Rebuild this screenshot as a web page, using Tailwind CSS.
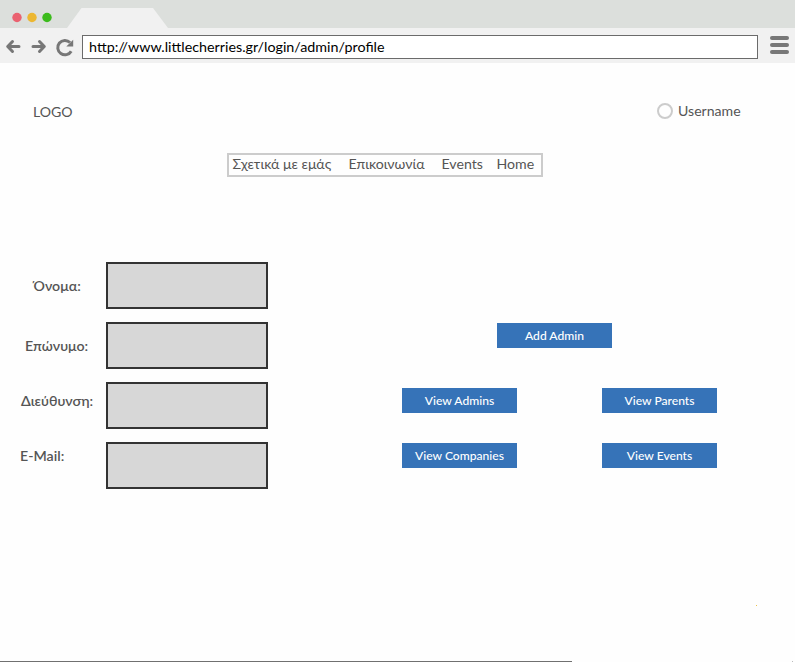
<!DOCTYPE html>
<html lang="el">
<head>
<meta charset="utf-8">
<title>Profile</title>
<script src="https://cdn.jsdelivr.net/npm/@tailwindcss/browser@4"></script>
</head>
<body class="w-[795px] h-[662px] overflow-hidden bg-[#fefefe] font-['Lato','Open_Sans',sans-serif] text-[#555] text-[14px] flex flex-col">
  <header class="h-[63px] shrink-0 bg-[#f1f1f1]">
    <div class="h-7 bg-[#dcdfdc] flex">
      <svg class="w-[168px] h-7" viewBox="0 0 168 28">
        <circle cx="17" cy="17.5" r="4.7" fill="#ea6270"/>
        <circle cx="32" cy="17.5" r="4.7" fill="#ecb731"/>
        <circle cx="47" cy="17.5" r="4.7" fill="#3cbb1c"/>
        <path d="M67 28 81.5 8H153L168 28Z" fill="#f1f1f1"/>
      </svg>
    </div>
    <div class="h-[35px] flex items-start pt-[7px]">
      <svg class="w-[82px] h-6 shrink-0" viewBox="0 35 82 24" fill="none" stroke="#777" stroke-width="3" stroke-linecap="round" stroke-linejoin="round">
        <path d="M8.500 46.500H19M12.500 41.500 7.700 46.500 12.500 51.500"/>
        <path d="M33 46.500H43.500M39.500 41.500 44.300 46.500 39.500 51.500"/>
        <path d="M71.200 51.200A7.200 7.200 0 1 1 70 42.500" stroke-linecap="butt"/>
        <path d="M73.200 39.800V46.500H66.300Z" fill="#777" stroke="none"/>
      </svg>
      <div class="w-[676px] h-6 border border-[#6b6b6b] bg-white pl-[6px] text-[14.3px] text-black leading-[22px] whitespace-nowrap">http://www.littlecherries.gr/login/admin/profile</div>
      <div class="ml-3 mt-px flex flex-col gap-[3px]">
        <i class="block w-[19px] h-1 rounded-full bg-[#777]"></i>
        <i class="block w-[19px] h-1 rounded-full bg-[#777]"></i>
        <i class="block w-[19px] h-1 rounded-full bg-[#777]"></i>
      </div>
    </div>
  </header>

  <div class="h-[90px] shrink-0 flex items-start justify-between pl-[33px] pt-[39px] leading-5">
    <span class="text-[14.100px]">LOGO</span>
    <div class="flex w-[139px]">
      <i class="block size-4 rounded-full border-2 border-[#ccc] ml-[0.5px] mt-[0.5px]"></i>
      <span class="ml-[5.5px] -mt-px text-[14.100px]">Username</span>
    </div>
  </div>

  <nav class="ml-[227px] w-[316px] h-6 shrink-0 border-2 border-[#ccc] flex pl-[3.5px] text-[14.150px] leading-[17px] whitespace-nowrap">
    <a class="w-[116px]">Σχετικά με εμάς</a>
    <a class="w-[93px]">Επικοινωνία</a>
    <a class="w-[55px]">Events</a>
    <a>Home</a>
  </nav>

  <main class="mt-[85px] flex">
    <div class="w-[106px] flex flex-col text-[14.200px] font-semibold leading-5 pt-[14px] whitespace-nowrap">
      <label class="pl-[33.500px] h-[60px]">Όνομα:</label>
      <label class="pl-[25px] h-[55px]">Επώνυμο:</label>
      <label class="pl-[21px] h-[55px]">Διεύθυνση:</label>
      <label class="pl-[20px]">E-Mail:</label>
    </div>
    <div class="w-[162px] flex flex-col gap-[13px]">
      <div class="h-[47px] border-2 border-[#333] bg-[#d7d7d7]"></div>
      <div class="h-[47px] border-2 border-[#333] bg-[#d7d7d7]"></div>
      <div class="h-[47px] border-2 border-[#333] bg-[#d7d7d7]"></div>
      <div class="h-[47px] border-2 border-[#333] bg-[#d7d7d7]"></div>
    </div>
    <div class="ml-[134px] mt-[61px] w-[315px] flex flex-col items-center text-[12.100px] leading-[25px] text-white font-medium text-center">
      <div class="w-[115px] h-[25px] bg-[#3673b8] mr-[10px]">Add Admin</div>
      <div class="mt-10 grid grid-cols-[115px_115px] gap-x-[85px] gap-y-[30px]">
        <div class="h-[25px] bg-[#3673b8]">View Admins</div>
        <div class="h-[25px] bg-[#3673b8]">View Parents</div>
        <div class="h-[25px] bg-[#3673b8]">View Companies</div>
        <div class="h-[25px] bg-[#3673b8]">View Events</div>
      </div>
    </div>
  </main>
  <footer class="mt-auto">
    <div class="flex justify-end pr-[38px] h-[56px]"><i class="block size-px bg-[#ecc14a]"></i></div>
    <div class="flex justify-between pr-[2px]"><i class="block w-[572px] h-px bg-[#707070]"></i><i class="block size-px bg-[#bbb]"></i></div>
  </footer>
</body>
</html>
